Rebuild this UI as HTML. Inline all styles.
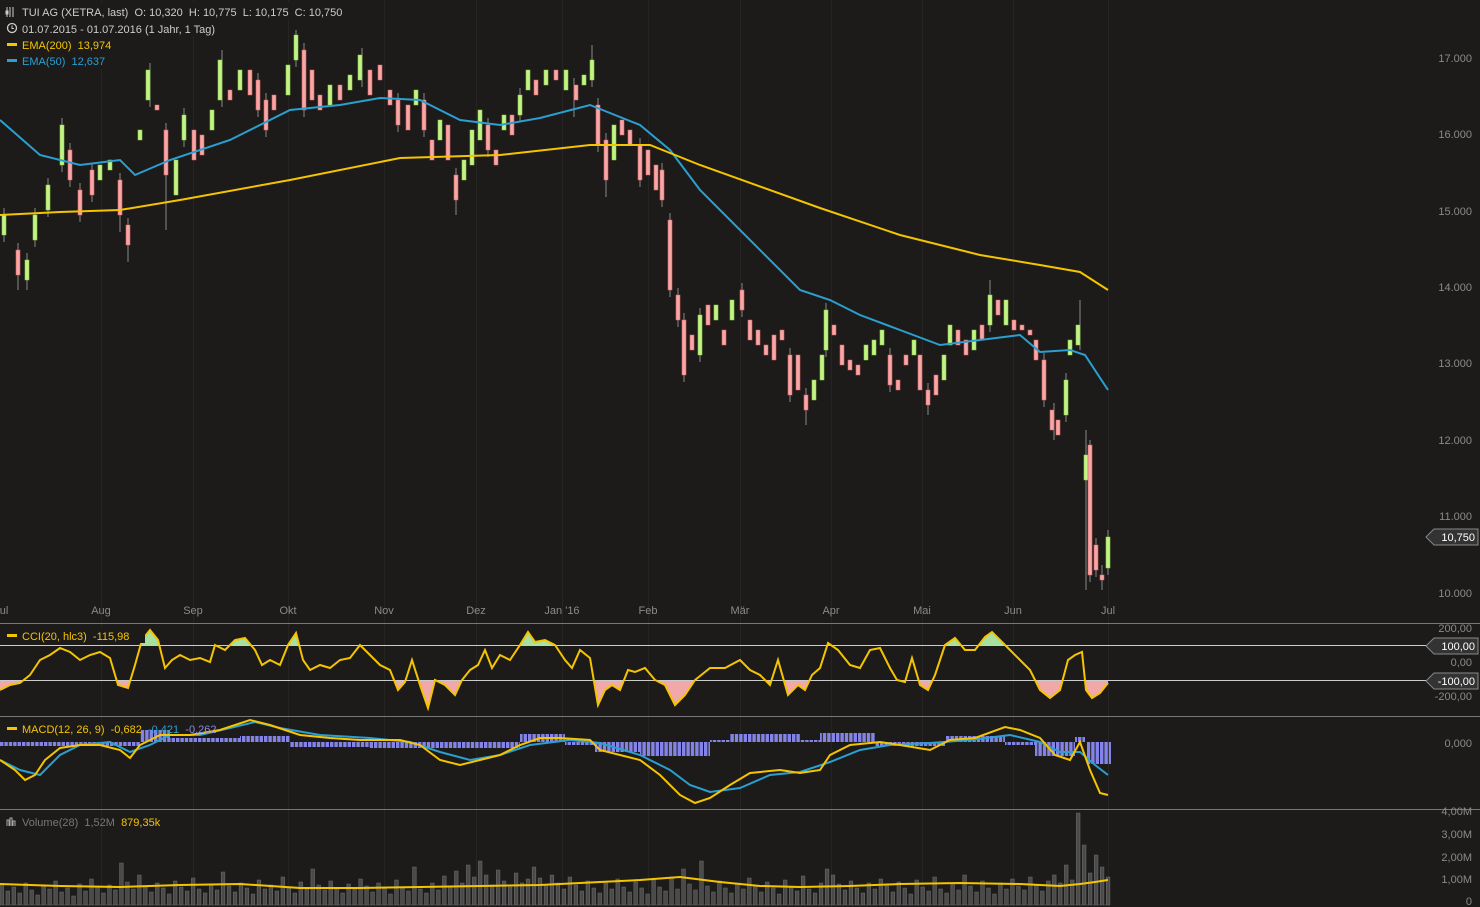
<!DOCTYPE html>
<html><head><meta charset="utf-8"><style>
html,body{margin:0;padding:0;background:#1c1b1a;overflow:hidden}
svg{display:block}
text{font-family:"Liberation Sans",sans-serif;font-size:11px}
</style></head><body>
<svg width="1480" height="907" xmlns="http://www.w3.org/2000/svg">
<defs>
<clipPath id="cr"><rect x="0" y="680" width="1110" height="36"/></clipPath>
<clipPath id="cg"><rect x="0" y="624" width="1110" height="21"/></clipPath>
<pattern id="st" width="4.4" height="10" patternUnits="userSpaceOnUse"><rect width="3.4" height="10" fill="#8484e8"/></pattern>
</defs>
<rect width="1480" height="907" fill="#1c1b1a"/>
<g stroke="#262524"><path d="M101.5,0V907M193.5,0V907M288.5,0V907M384.5,0V907M476.5,0V907M562.5,0V907M648.5,0V907M740.5,0V907M831.5,0V907M922.5,0V907M1013.5,0V907M1108.5,0V907"/></g>

<path stroke="#888" fill="none" d="M4,208V242M18,243V290M27,253V290M35,208V247M48,178V217M62,118V172M70,143V187M80,183V222M92,163V202M120,173V232M128,218V262M150,63V107M166,123V230M184,108V147M222,50V107M258,73V117M266,93V137M296,30V67M304,43V117M362,48V87M398,93V132M424,93V137M456,168V215M488,118V157M520,88V122M574,78V117M592,45V87M598,98V152M606,133V197M640,138V187M662,163V207M670,213V297M678,288V327M684,313V382M700,308V362M742,283V317M790,348V402M806,388V425M826,303V357M890,348V392M928,383V415M990,280V332M1044,353V407M1054,403V440M1066,373V422M1080,300V350M1086,430V590M1090,440V582M1096,538V577M1102,565V590M1108,530V575"/>
<path fill="#c4f28a" stroke="#8fd040" stroke-width=".6" d="M2,215h4v20h-4z M25,260h4v20h-4z M33,215h4v25h-4z M46,185h4v25h-4z M60,125h4v40h-4z M98,165h4v15h-4z M108,160h4v10h-4z M138,130h4v10h-4z M146,70h4v30h-4z M174,160h4v35h-4z M182,115h4v25h-4z M210,110h4v20h-4z M218,60h4v40h-4z M238,70h4v20h-4z M286,65h4v30h-4z M294,35h4v25h-4z M328,85h4v20h-4z M348,75h4v15h-4z M358,55h4v25h-4z M414,90h4v15h-4z M438,120h4v20h-4z M462,160h4v20h-4z M470,130h4v35h-4z M478,110h4v30h-4z M502,115h4v15h-4z M518,95h4v20h-4z M526,70h4v20h-4z M544,70h4v15h-4z M564,70h4v20h-4z M582,75h4v10h-4z M590,60h4v20h-4z M612,125h4v35h-4z M698,315h4v40h-4z M714,305h4v15h-4z M730,300h4v20h-4z M812,380h4v20h-4z M820,355h4v25h-4z M824,310h4v40h-4z M864,345h4v15h-4z M872,340h4v15h-4z M880,330h4v15h-4z M912,340h4v15h-4z M942,355h4v25h-4z M948,325h4v20h-4z M972,330h4v20h-4z M988,295h4v30h-4z M1004,300h4v25h-4z M1064,380h4v35h-4z M1068,340h4v15h-4z M1076,325h4v20h-4z M1084,455h4v25h-4z M1106,537h4v31h-4z"/>
<path fill="#f5a8a8" stroke="#e06060" stroke-width=".6" d="M16,250h4v25h-4z M68,150h4v30h-4z M78,190h4v25h-4z M90,170h4v25h-4z M118,180h4v35h-4z M126,225h4v20h-4z M155,105h4v5h-4z M164,130h4v45h-4z M192,130h4v30h-4z M200,135h4v20h-4z M228,90h4v10h-4z M248,70h4v25h-4z M256,80h4v30h-4z M264,100h4v30h-4z M272,95h4v15h-4z M302,50h4v60h-4z M310,70h4v30h-4z M318,95h4v15h-4z M338,85h4v15h-4z M368,70h4v25h-4z M378,65h4v15h-4z M388,90h4v15h-4z M396,100h4v25h-4z M406,105h4v25h-4z M422,100h4v30h-4z M430,140h4v20h-4z M446,125h4v35h-4z M454,175h4v25h-4z M486,125h4v25h-4z M494,150h4v15h-4z M510,115h4v20h-4z M534,80h4v15h-4z M554,70h4v10h-4z M574,85h4v15h-4z M596,105h4v40h-4z M604,140h4v40h-4z M620,120h4v15h-4z M628,130h4v15h-4z M638,145h4v35h-4z M646,150h4v25h-4z M654,165h4v25h-4z M660,170h4v30h-4z M668,220h4v70h-4z M676,295h4v25h-4z M682,320h4v55h-4z M690,335h4v15h-4z M706,305h4v20h-4z M722,330h4v15h-4z M740,290h4v20h-4z M748,320h4v20h-4z M756,330h4v15h-4z M764,345h4v10h-4z M772,335h4v25h-4z M780,330h4v10h-4z M788,355h4v40h-4z M796,355h4v35h-4z M804,395h4v15h-4z M832,325h4v10h-4z M840,345h4v20h-4z M848,360h4v10h-4z M856,365h4v10h-4z M888,355h4v30h-4z M896,380h4v10h-4z M904,355h4v10h-4z M918,355h4v35h-4z M926,390h4v15h-4z M934,375h4v20h-4z M956,330h4v15h-4z M964,340h4v15h-4z M980,325h4v15h-4z M996,300h4v15h-4z M1012,320h4v10h-4z M1020,325h4v5h-4z M1028,330h4v5h-4z M1034,340h4v20h-4z M1042,360h4v40h-4z M1050,410h4v20h-4z M1056,420h4v15h-4z M1088,445h4v130h-4z M1094,545h4v25h-4z M1100,575h4v5h-4z"/>

<polyline fill="none" stroke="#2a9fd0" stroke-width="2" points="0,120 40,155 80,165 120,160 135,175 170,160 230,140 290,110 340,105 380,98 420,100 460,120 500,125 540,118 590,105 640,125 670,150 700,190 740,230 800,290 830,300 860,315 900,330 940,345 980,340 1020,335 1040,352 1070,350 1085,355 1108,390"/>
<polyline fill="none" stroke="#f5c400" stroke-width="2" points="0,215 60,212 120,210 180,200 290,180 400,158 500,155 590,145 650,145 700,165 820,208 900,235 980,255 1040,265 1080,272 1108,290"/>

<g clip-path="url(#cr)"><polygon fill="#f0a8a8" points="0,680 0,690 10,685 20,683 30,675 40,660 50,655 60,648 70,652 80,660 90,655 100,652 110,658 118,685 128,688 135,665 142,640 150,630 158,640 165,668 172,660 180,655 190,660 200,658 210,662 215,645 225,650 235,640 245,638 255,650 262,665 270,660 280,665 288,645 296,633 303,660 310,670 320,665 330,668 340,660 350,658 360,645 370,655 380,665 390,670 398,690 405,682 412,660 420,685 428,708 435,680 445,685 455,695 462,680 470,670 478,665 485,650 492,668 500,655 510,660 520,645 528,632 535,642 545,640 555,645 565,660 572,668 580,650 590,658 598,705 605,690 612,685 620,690 628,670 635,672 645,668 655,680 665,685 675,705 685,695 695,680 710,668 725,668 740,660 750,670 760,675 770,685 778,660 788,695 798,685 805,690 812,675 820,668 828,643 838,650 850,665 860,668 870,650 880,648 890,668 897,680 905,682 912,658 920,685 928,690 935,675 945,645 955,638 965,650 975,650 985,637 992,632 1000,640 1010,650 1020,660 1030,670 1040,690 1050,698 1060,690 1068,660 1075,655 1082,652 1086,690 1092,698 1100,693 1108,683 1108,680"/></g>
<g clip-path="url(#cg)"><polygon fill="#a8e0a0" points="0,645 0,690 10,685 20,683 30,675 40,660 50,655 60,648 70,652 80,660 90,655 100,652 110,658 118,685 128,688 135,665 142,640 150,630 158,640 165,668 172,660 180,655 190,660 200,658 210,662 215,645 225,650 235,640 245,638 255,650 262,665 270,660 280,665 288,645 296,633 303,660 310,670 320,665 330,668 340,660 350,658 360,645 370,655 380,665 390,670 398,690 405,682 412,660 420,685 428,708 435,680 445,685 455,695 462,680 470,670 478,665 485,650 492,668 500,655 510,660 520,645 528,632 535,642 545,640 555,645 565,660 572,668 580,650 590,658 598,705 605,690 612,685 620,690 628,670 635,672 645,668 655,680 665,685 675,705 685,695 695,680 710,668 725,668 740,660 750,670 760,675 770,685 778,660 788,695 798,685 805,690 812,675 820,668 828,643 838,650 850,665 860,668 870,650 880,648 890,668 897,680 905,682 912,658 920,685 928,690 935,675 945,645 955,638 965,650 975,650 985,637 992,632 1000,640 1010,650 1020,660 1030,670 1040,690 1050,698 1060,690 1068,660 1075,655 1082,652 1086,690 1092,698 1100,693 1108,683 1108,645"/></g>
<line x1="0" y1="645.5" x2="1440" y2="645.5" stroke="#ccc"/>
<line x1="0" y1="680.5" x2="1440" y2="680.5" stroke="#ccc"/>
<polyline fill="none" stroke="#f5c400" stroke-width="2" points="0,690 10,685 20,683 30,675 40,660 50,655 60,648 70,652 80,660 90,655 100,652 110,658 118,685 128,688 135,665 142,640 150,630 158,640 165,668 172,660 180,655 190,660 200,658 210,662 215,645 225,650 235,640 245,638 255,650 262,665 270,660 280,665 288,645 296,633 303,660 310,670 320,665 330,668 340,660 350,658 360,645 370,655 380,665 390,670 398,690 405,682 412,660 420,685 428,708 435,680 445,685 455,695 462,680 470,670 478,665 485,650 492,668 500,655 510,660 520,645 528,632 535,642 545,640 555,645 565,660 572,668 580,650 590,658 598,705 605,690 612,685 620,690 628,670 635,672 645,668 655,680 665,685 675,705 685,695 695,680 710,668 725,668 740,660 750,670 760,675 770,685 778,660 788,695 798,685 805,690 812,675 820,668 828,643 838,650 850,665 860,668 870,650 880,648 890,668 897,680 905,682 912,658 920,685 928,690 935,675 945,645 955,638 965,650 975,650 985,637 992,632 1000,640 1010,650 1020,660 1030,670 1040,690 1050,698 1060,690 1068,660 1075,655 1082,652 1086,690 1092,698 1100,693 1108,683"/>

<g fill="url(#st)">
<rect x="0" y="742" width="140" height="4"/><rect x="140" y="730" width="30" height="12"/><rect x="170" y="738" width="70" height="4"/><rect x="240" y="736" width="50" height="6"/><rect x="290" y="742" width="80" height="5"/><rect x="370" y="742" width="150" height="6"/><rect x="520" y="734" width="45" height="8"/><rect x="565" y="742" width="30" height="3"/><rect x="595" y="742" width="45" height="10"/><rect x="640" y="742" width="70" height="14"/><rect x="710" y="740" width="20" height="2"/><rect x="730" y="734" width="70" height="8"/><rect x="800" y="740" width="20" height="2"/><rect x="820" y="733" width="55" height="9"/><rect x="875" y="742" width="70" height="4"/><rect x="945" y="736" width="60" height="6"/><rect x="1005" y="742" width="30" height="3"/><rect x="1035" y="742" width="40" height="14"/><rect x="1075" y="737" width="10" height="5"/><rect x="1087" y="742" width="24" height="22"/>
</g>
<polyline fill="none" stroke="#2a9fd0" stroke-width="2" points="0,760 20,770 40,775 60,755 80,745 110,742 130,752 150,745 170,735 200,735 230,728 255,722 280,728 320,735 370,738 410,742 440,752 470,760 500,755 530,745 570,740 600,743 640,755 670,770 690,785 710,792 740,788 770,775 800,772 830,762 860,750 890,745 930,743 970,740 1010,735 1040,742 1060,752 1080,752 1095,765 1108,775"/>
<polyline fill="none" stroke="#f5c400" stroke-width="2" points="0,760 15,770 25,780 35,775 45,760 60,748 80,745 100,745 120,750 130,758 140,745 160,735 190,735 220,730 250,720 270,725 300,735 330,738 360,740 400,740 420,745 440,760 460,765 480,760 500,755 520,745 540,738 560,738 590,740 600,750 620,755 640,760 660,775 680,795 695,803 710,798 730,785 750,773 780,770 800,773 820,770 830,755 850,745 880,742 900,745 930,750 950,740 975,738 1005,727 1020,730 1040,738 1055,755 1070,760 1080,742 1090,770 1100,793 1108,795"/>

<g transform="scale(1.196,1)">
<path fill="#4a4a4a" stroke="#6a6a6a" stroke-width=".5" d="M0,905v-20h3v20h2v-14h3v14h2v-18h3v18h2v-12h3v12h2v-22h3v22h2v-15h3v15h2v-10h3v10h2v-19h3v19h2v-16h3v16h2v-24h3v24h2v-13h3v13h2v-17h3v17h2v-9h3v9h2v-21h3v21h2v-14h3v14h2v-26h3v26h2v-18h3v18h2v-12h3v12h2v-20h3v20h2v-15h3v15h2v-42h3v42h2v-23h3v23h2v-16h3v16h2v-30h3v30h2v-19h3v19h2v-13h3v13h2v-22h3v22h2v-17h3v17h2v-11h3v11h2v-24h3v24h2v-18h3v18h2v-14h3v14h2v-27h3v27h2v-16h3v16h2v-12h3v12h2v-21h3v21h2v-15h3v15h2v-33h3v33h2v-19h3v19h2v-13h3v13h2v-22h3v22h2v-17h3v17h2v-11h3v11h2v-25h3v25h2v-16h3v16h2v-20h3v20h2v-14h3v14h2v-28h3v28h2v-18h3v18h2v-12h3v12h2v-23h3v23h2v-16h3v16h2v-36h3v36h2v-20h3v20h2v-15h3v15h2v-24h3v24h2v-17h3v17h2v-12h3v12h2v-21h3v21h2v-16h3v16h2v-26h3v26h2v-19h3v19h2v-13h3v13h2v-22h3v22h2v-17h3v17h2v-11h3v11h2v-25h3v25h2v-18h3v18h2v-14h3v14h2v-38h3v38h2v-16h3v16h2v-12h3v12h2v-22h3v22h2v-15h3v15h2v-29h3v29h2v-19h3v19h2v-34h3v34h2v-22h3v22h2v-40h3v40h2v-28h3v28h2v-44h3v44h2v-30h3v30h2v-20h3v20h2v-35h3v35h2v-24h3v24h2v-18h3v18h2v-32h3v32h2v-22h3v22h2v-26h3v26h2v-38h3v38h2v-27h3v27h2v-20h3v20h2v-30h3v30h2v-22h3v22h2v-16h3v16h2v-28h3v28h2v-20h3v20h2v-14h3v14h2v-24h3v24h2v-17h3v17h2v-12h3v12h2v-22h3v22h2v-16h3v16h2v-26h3v26h2v-18h3v18h2v-13h3v13h2v-23h3v23h2v-17h3v17h2v-11h3v11h2v-25h3v25h2v-18h3v18h2v-14h3v14h2v-28h3v28h2v-16h3v16h2v-36h3v36h2v-21h3v21h2v-15h3v15h2v-44h3v44h2v-19h3v19h2v-13h3v13h2v-24h3v24h2v-17h3v17h2v-12h3v12h2v-22h3v22h2v-16h3v16h2v-27h3v27h2v-19h3v19h2v-13h3v13h2v-23h3v23h2v-17h3v17h2v-11h3v11h2v-25h3v25h2v-18h3v18h2v-14h3v14h2v-29h3v29h2v-16h3v16h2v-12h3v12h2v-22h3v22h2v-36h3v36h2v-30h3v30h2v-21h3v21h2v-15h3v15h2v-24h3v24h2v-17h3v17h2v-12h3v12h2v-22h3v22h2v-16h3v16h2v-26h3v26h2v-19h3v19h2v-13h3v13h2v-23h3v23h2v-17h3v17h2v-11h3v11h2v-25h3v25h2v-18h3v18h2v-14h3v14h2v-28h3v28h2v-16h3v16h2v-12h3v12h2v-22h3v22h2v-15h3v15h2v-30h3v30h2v-19h3v19h2v-13h3v13h2v-24h3v24h2v-17h3v17h2v-11h3v11h2v-22h3v22h2v-16h3v16h2v-26h3v26h2v-19h3v19h2v-15h3v15h2v-28h3v28h2v-20h3v20h2v-14h3v14h2v-24h3v24h2v-30h3v30h2v-22h3v22h2v-40h3v40h2v-25h3v25h2v-92h3v92h2v-60h3v60h2v-32h3v32h2v-50h3v50h2v-38h3v38h2v-28h3v28z"/>
</g>
<polyline fill="none" stroke="#f5c400" stroke-width="2" points="0,884 60,886 120,887 180,885 240,884 300,888 360,888 420,887 480,886 540,885 600,882 640,880 680,877 720,882 760,886 800,887 850,886 900,884 960,883 1020,884 1060,886 1080,884 1095,882 1108,880"/>

<line x1="0" y1="623.5" x2="1480" y2="623.5" stroke="#777"/>
<line x1="0" y1="716.5" x2="1480" y2="716.5" stroke="#777"/>
<line x1="0" y1="809.5" x2="1480" y2="809.5" stroke="#777"/>
<g fill="#8a8a8a" text-anchor="end">
<text x="1472" y="62">17.000</text><text x="1472" y="138">16.000</text><text x="1472" y="215">15.000</text><text x="1472" y="291">14.000</text><text x="1472" y="367">13.000</text><text x="1472" y="444">12.000</text><text x="1472" y="520">11.000</text><text x="1472" y="597">10.000</text>
<text x="1472" y="632">200,00</text><text x="1472" y="666">0,00</text><text x="1472" y="700">-200,00</text>
<text x="1472" y="747">0,000</text>
<text x="1472" y="815">4,00M</text><text x="1472" y="838">3,00M</text><text x="1472" y="861">2,00M</text><text x="1472" y="883">1,00M</text><text x="1472" y="905">0</text>
</g>
<g fill="#333" stroke="#888"><path d="M1426,537 L1434,529 L1478,529 L1478,545 L1434,545Z"/><path d="M1426,646 L1434,638 L1478,638 L1478,654 L1434,654Z"/><path d="M1426,681 L1434,673 L1478,673 L1478,689 L1434,689Z"/></g>
<g fill="#fff" text-anchor="end"><text x="1475" y="541">10,750</text><text x="1475" y="650">100,00</text><text x="1475" y="685">-100,00</text></g>
<g fill="#8a8a8a" text-anchor="middle">
<text x="4" y="614">ul</text><text x="101" y="614">Aug</text><text x="193" y="614">Sep</text><text x="288" y="614">Okt</text><text x="384" y="614">Nov</text><text x="476" y="614">Dez</text><text x="562" y="614">Jan '16</text><text x="648" y="614">Feb</text><text x="740" y="614">Mär</text><text x="831" y="614">Apr</text><text x="922" y="614">Mai</text><text x="1013" y="614">Jun</text><text x="1108" y="614">Jul</text>
</g>
<g>
<rect x="0" y="2" width="372" height="17" fill="#1c1b1a"/>
<rect x="0" y="20" width="240" height="16" fill="#1c1b1a"/>
<rect x="0" y="37" width="125" height="32" fill="#1c1b1a"/>
<rect x="0" y="628" width="145" height="15" fill="#1c1b1a"/>
<g stroke="#ccc" fill="none"><path d="M7,7v10M10,7v10M13,7v10"/><rect x="6" y="11" width="2" height="3"/></g>
<text x="22" y="16" fill="#ccc" xml:space="preserve">TUI AG (XETRA, last)  O: 10,320  H: 10,775  L: 10,175  C: 10,750</text>
<circle cx="12" cy="28" r="4.5" stroke="#ccc" fill="none" stroke-width="1.3"/><path d="M12,25.5v3h2" stroke="#ccc" fill="none"/>
<text x="22" y="33" fill="#ccc">01.07.2015 - 01.07.2016 (1 Jahr, 1 Tag)</text>
<rect x="7" y="43" width="10" height="3" fill="#f5c400"/><text x="22" y="49" fill="#f5c400" xml:space="preserve">EMA(200)  13,974</text>
<rect x="7" y="59" width="10" height="3" fill="#2a9fd0"/><text x="22" y="65" fill="#2a9fd0" xml:space="preserve">EMA(50)  12,637</text>
<rect x="7" y="634" width="10" height="3" fill="#f5c400"/><text x="22" y="640" fill="#f5c400" xml:space="preserve">CCI(20, hlc3)  -115,98</text>
<rect x="7" y="727" width="10" height="3" fill="#f5c400"/><text x="22" y="733" fill="#f5c400" xml:space="preserve">MACD(12, 26, 9)  -0,682  <tspan fill="#2a9fd0">-0,421</tspan>  <tspan fill="#8a8ae0">-0,262</tspan></text>
<path d="M7,826v-6h2v6M10,826v-8h2v8M13,826v-5h2v5" stroke="#aaa" fill="none"/><text x="22" y="826" fill="#777" xml:space="preserve">Volume(28)  1,52M  <tspan fill="#f5c400">879,35k</tspan></text>
</g>
</svg>
</body></html>
